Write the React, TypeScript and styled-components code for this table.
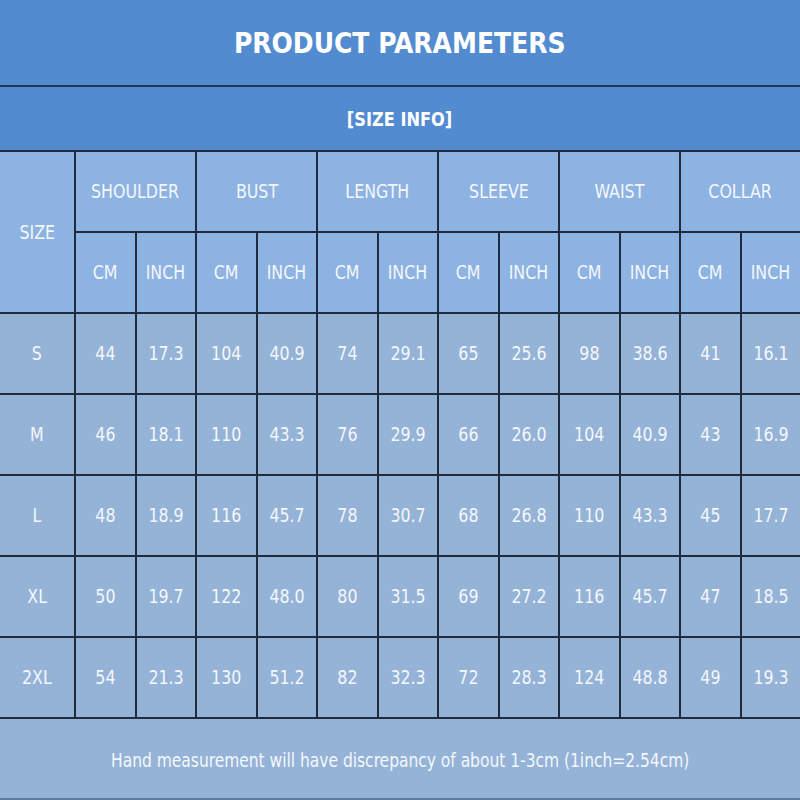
import React from "react";
import styled, { createGlobalStyle } from "styled-components";

const Global = createGlobalStyle`
  html, body { margin: 0; padding: 0; background: #95b3d7; }
  body { font-family: "DejaVu Sans Condensed", "DejaVu Sans", Verdana, sans-serif; font-stretch: condensed; }
`;

const Page = styled.div`
  width: 800px;
  height: 800px;
  display: flex;
  flex-direction: column;
  overflow: hidden;
  color: #f5f8fc;
`;

const TitleBand = styled.div`
  height: 85px;
  background: #538bd1;
  border-bottom: 2px solid #1d3556;
  display: flex;
  align-items: center;
  justify-content: center;
  font-size: 29px;
  font-weight: bold;
  color: #ffffff;
`;

const SubBand = styled.div`
  height: 62px;
  background: #538bd1;
  display: flex;
  align-items: center;
  justify-content: center;
  font-size: 20px;
  font-weight: bold;
  color: #ffffff;
  padding-top: 1px;
`;

const Grid = styled.div`
  display: grid;
  grid-template-columns: 74px repeat(12, 1fr);
  grid-template-rows: repeat(7, 79px);
  gap: 2px;
  background: #1f2c3f;
  padding: 2px 0;
`;

const Cell = styled.div<{ $head?: boolean; $col?: string; $row?: string }>`
  background: ${(p) => (p.$head ? "#8db3e2" : "#95b3d7")};
  display: flex;
  align-items: center;
  justify-content: center;
  font-size: 20px;
  color: #f4f7fb;
  white-space: nowrap;
  padding-bottom: ${(p) => (p.$head ? "1px" : "1px")};
  grid-column: ${(p) => p.$col || "auto"};
  grid-row: ${(p) => p.$row || "auto"};
`;

const Narrow = styled.span<{ $sx: number }>`
  display: inline-block;
  transform: scaleX(${(p) => p.$sx});
  white-space: nowrap;
`;

const Footer = styled.div`
  flex: 1;
  background: #95b3d7;
  display: flex;
  align-items: center;
  justify-content: center;
  font-size: 20px;
  color: #f4f7fb;
  border-bottom: 2px solid #5f7a9e;
  padding-top: 3px;
`;

const groups = ["SHOULDER", "BUST", "LENGTH", "SLEEVE", "WAIST", "COLLAR"];

const rows: [string, string[]][] = [
  ["S", ["44", "17.3", "104", "40.9", "74", "29.1", "65", "25.6", "98", "38.6", "41", "16.1"]],
  ["M", ["46", "18.1", "110", "43.3", "76", "29.9", "66", "26.0", "104", "40.9", "43", "16.9"]],
  ["L", ["48", "18.9", "116", "45.7", "78", "30.7", "68", "26.8", "110", "43.3", "45", "17.7"]],
  ["XL", ["50", "19.7", "122", "48.0", "80", "31.5", "69", "27.2", "116", "45.7", "47", "18.5"]],
  ["2XL", ["54", "21.3", "130", "51.2", "82", "32.3", "72", "28.3", "124", "48.8", "49", "19.3"]],
];

const SX = 0.88;

export default function App() {
  return (
    <>
      <Global />
      <Page>
        <TitleBand>
          <Narrow $sx={0.96}>PRODUCT PARAMETERS</Narrow>
        </TitleBand>
        <SubBand>
          <Narrow $sx={0.9}>[SIZE INFO]</Narrow>
        </SubBand>
        <Grid>
          <Cell $head $col="1" $row="1 / span 2">
            <Narrow $sx={SX}>SIZE</Narrow>
          </Cell>
          {groups.map((g, i) => (
            <Cell key={g} $head $col={`${2 + i * 2} / span 2`} $row="1">
              <Narrow $sx={SX}>{g}</Narrow>
            </Cell>
          ))}
          {groups.map((g, i) => (
            <React.Fragment key={g + "u"}>
              <Cell $head $col={`${2 + i * 2}`} $row="2">
                <Narrow $sx={SX}>CM</Narrow>
              </Cell>
              <Cell $head $col={`${3 + i * 2}`} $row="2">
                <Narrow $sx={SX}>INCH</Narrow>
              </Cell>
            </React.Fragment>
          ))}
          {rows.map(([size, vals]) => (
            <React.Fragment key={size}>
              <Cell>
                <Narrow $sx={SX}>{size}</Narrow>
              </Cell>
              {vals.map((v, j) => (
                <Cell key={j}>
                  <Narrow $sx={SX}>{v}</Narrow>
                </Cell>
              ))}
            </React.Fragment>
          ))}
        </Grid>
        <Footer>
          <Narrow $sx={0.86}>Hand measurement will have discrepancy of about 1-3cm (1inch=2.54cm)</Narrow>
        </Footer>
      </Page>
    </>
  );
}
